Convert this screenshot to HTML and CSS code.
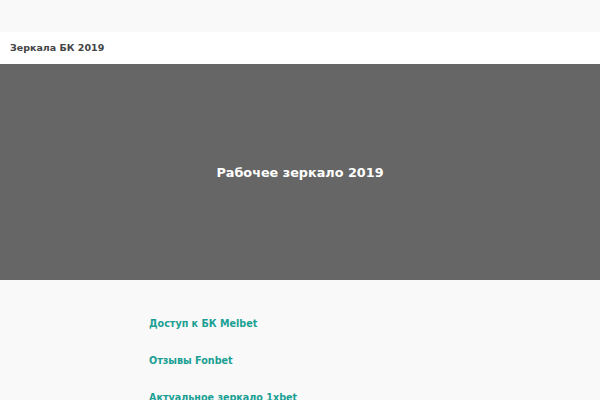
FILE: index.html
```html
<!DOCTYPE html>
<html lang="ru">
<head>
<meta charset="utf-8">
<link rel="stylesheet" href="styles.css">
</head>
<body>
<div class="topbar"></div>
<header class="header"><span class="site-title">Зеркала БК 2019</span></header>
<section class="hero"><h1 class="hero-title">Рабочее зеркало 2019</h1></section>
<main class="content">
  <ul class="links">
    <li><a href="#">Доступ к БК Melbet</a></li>
    <li><a href="#">Отзывы Fonbet</a></li>
    <li><a href="#">Актуальное зеркало 1xbet</a></li>
  </ul>
</main>
</body>
</html>
```
FILE: styles.css
```css
html, body { margin: 0; padding: 0; }
body {
  background: #f9f9f9;
  font-family: "DejaVu Sans", sans-serif;
  overflow: hidden;
  height: 400px;
}
.topbar { height: 32px; background: #f9f9f9; }
.header {
  height: 31px;
  background: #fff;
  display: flex;
  align-items: center;
  padding-left: 10px;
  padding-bottom: 1px;
}
.site-title { font-size: 9.5px; font-weight: bold; color: #444; }
.hero {
  height: 216px;
  background: #666;
  display: flex;
  align-items: center;
  justify-content: center;
}
.hero-title { margin: 0; font-size: 12.8px; font-weight: bold; color: #fff; }
.content { padding-left: 149px; padding-top: 38px; }
.links { list-style: none; margin: 0; padding: 0; display: flex; flex-direction: column; gap: 25px; }
.links a { font-size: 9.6px; font-weight: bold; color: #1aa094; text-decoration: none; line-height: 12px; display: block; }
```
